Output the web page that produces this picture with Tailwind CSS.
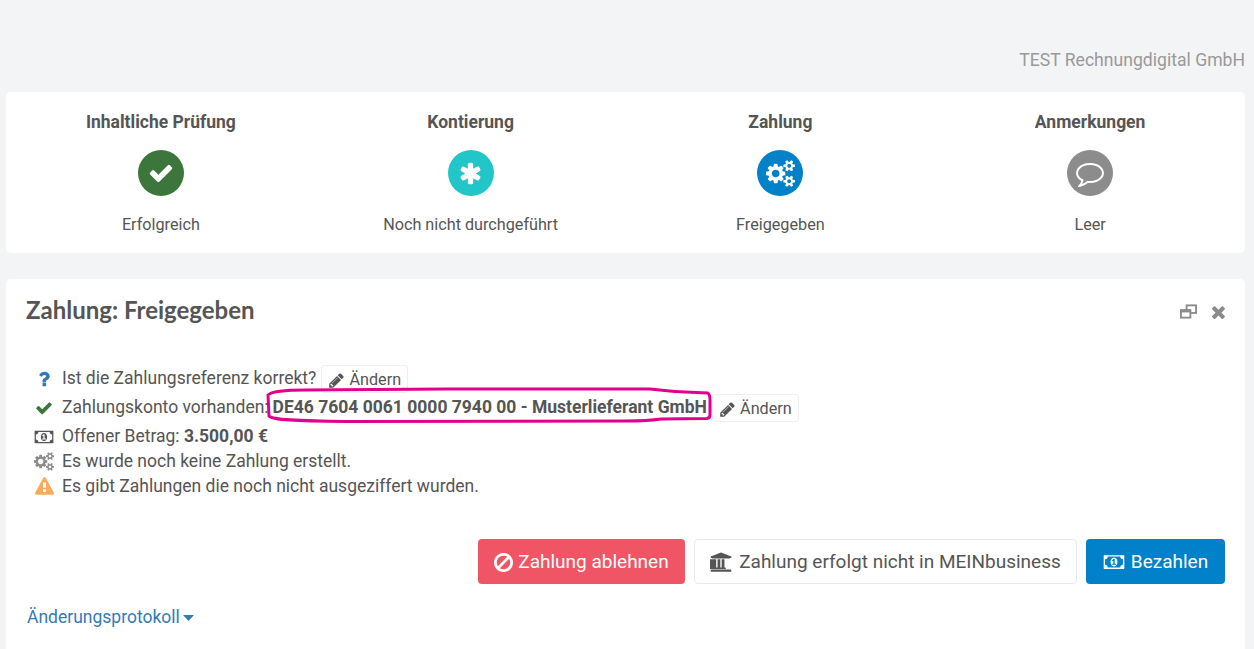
<!DOCTYPE html>
<html lang="de">
<head>
<meta charset="utf-8">
<title>Zahlung</title>
<script src="https://cdn.jsdelivr.net/npm/@tailwindcss/browser@4"></script>
</head>
<body class="bg-[#f3f4f6] font-['Roboto',sans-serif] text-[16.2px] text-[#555555] h-[649px] overflow-hidden">
<div class="h-[92px] flex items-start justify-end pt-[50px] pr-[9px] text-[17.6px] leading-[21px] text-[#999999]">TEST Rechnungdigital GmbH</div>

<section class="mx-[6px] w-[1239px] h-[161px] bg-white rounded-[5px] grid grid-cols-4 text-center">
  <div class="flex flex-col items-center pt-[18px]">
    <h3 class="font-bold text-[17.5px] leading-[24px] text-[#555555]">Inhaltliche Prüfung</h3>
    <div class="mt-[16px] w-[46px] h-[46px] rounded-full bg-[#3d763d] flex items-center justify-center">
      <svg class="w-[26px] h-[26px] fill-white" viewBox="0 0 1792 1792"><path d="M1671 566q0-40-28-68l-136-136q-28-28-68-28t-68 28l-656 657-294-295q-28-28-68-28t-68 28l-136 136q-28 28-28 68t28 68l362 362 136 136q28 28 68 28t68-28l136-136 724-724q28-28 28-68z"/></svg>
    </div>
    <p class="mt-[17px] leading-[24px]">Erfolgreich</p>
  </div>
  <div class="flex flex-col items-center pt-[18px]">
    <h3 class="font-bold text-[17.5px] leading-[24px] text-[#555555]">Kontierung</h3>
    <div class="mt-[16px] w-[46px] h-[46px] rounded-full bg-[#23c6c8] flex items-center justify-center">
      <svg class="w-[25px] h-[25px] fill-white" viewBox="0 0 1792 1792"><path d="M1546 1050q46 26 59.500 77.500t-12.500 97.500l-64 110q-26 46-77.500 59.500t-97.500-12.500l-266-153v307q0 52-38 90t-90 38h-128q-52 0-90-38t-38-90v-307l-266 153q-46 26-97.500 12.500t-77.500-59.500l-64-110q-26-46-12.500-97.500t59.500-77.500l266-154-266-154q-46-26-59.500-77.500t12.500-97.500l64-110q26-46 77.500-59.500t97.500 12.500l266 153v-307q0-52 38-90t90-38h128q52 0 90 38t38 90v307l266-153q46-26 97.500-12.500t77.500 59.500l64 110q26 46 12.500 97.500t-59.500 77.500l-266 154z"/></svg>
    </div>
    <p class="mt-[17px] leading-[24px]">Noch nicht durchgeführt</p>
  </div>
  <div class="flex flex-col items-center pt-[18px]">
    <h3 class="font-bold text-[17.5px] leading-[24px] text-[#555555]">Zahlung</h3>
    <div class="mt-[16px] w-[46px] h-[46px] rounded-full bg-[#0081c9] flex items-center justify-center">
      <svg class="w-[29px] h-[27px] fill-white" viewBox="0 0 1920 1792"><path d="M896 896q0-106-75-181t-181-75-181 75-75 181 75 181 181 75 181-75 75-181zm768 512q0-52-38-90t-90-38-90 38-38 90q0 53 37.500 90.500t90.500 37.500 90.500-37.500 37.500-90.500zm0-1024q0-52-38-90t-90-38-90 38-38 90q0 53 37.500 90.500t90.500 37.500 90.500-37.500 37.500-90.500zm-384 421v185q0 10-7 19.500t-16 10.500l-155 24q-11 35-32 76 34 48 90 115 7 11 7 20 0 12-7 19-23 30-82.500 89.500t-78.500 59.500q-11 0-21-7l-115-90q-37 19-77 31-11 108-23 155-7 24-30 24h-186q-11 0-20-7.500t-10-17.500l-23-153q-34-10-75-31l-118 89q-7 7-20 7-11 0-21-8-144-133-144-160 0-9 7-19 10-14 41-53t47-61q-23-44-35-82l-152-24q-10-1-17-9.500t-7-19.500v-185q0-10 7-19.500t16-10.500l155-24q11-35 32-76-34-48-90-115-7-11-7-20 0-12 7-20 22-30 82-89t79-59q11 0 21 7l115 90q34-18 77-32 11-108 23-154 7-24 30-24h186q11 0 20 7.500t10 17.500l23 153q34 10 75 31l118-89q8-7 20-7 11 0 21 8 144 133 144 160 0 8-7 19-12 16-42 54t-45 60q23 48 34 82l152 23q10 2 17 10.500t7 19.500zm640 533v140q0 16-149 31-12 27-30 52 51 113 51 138 0 4-4 7-122 71-124 71-8 0-46-47t-52-68q-20 2-30 2t-30-2q-14 21-52 68t-46 47q-2 0-124-71-4-3-4-7 0-25 51-138-18-25-30-52-149-15-149-31v-140q0-16 149-31 13-29 30-52-51-113-51-138 0-4 4-7 4-2 35-20t59-34 30-16q8 0 46 46.500t52 67.500q20-2 30-2t30 2q51-71 92-112l6-2q4 0 124 70 4 3 4 7 0 25-51 138 17 23 30 52 149 15 149 31zm0-1024v140q0 16-149 31-12 27-30 52 51 113 51 138 0 4-4 7-122 71-124 71-8 0-46-47t-52-68q-20 2-30 2t-30-2q-14 21-52 68t-46 47q-2 0-124-71-4-3-4-7 0-25 51-138-18-25-30-52-149-15-149-31v-140q0-16 149-31 13-29 30-52-51-113-51-138 0-4 4-7 4-2 35-20t59-34 30-16q8 0 46 46.500t52 67.500q20-2 30-2t30 2q51-71 92-112l6-2q4 0 124 70 4 3 4 7 0 25-51 138 17 23 30 52 149 15 149 31z"/></svg>
    </div>
    <p class="mt-[17px] leading-[24px]">Freigegeben</p>
  </div>
  <div class="flex flex-col items-center pt-[18px]">
    <h3 class="font-bold text-[17.5px] leading-[24px] text-[#555555]">Anmerkungen</h3>
    <div class="mt-[16px] w-[46px] h-[46px] rounded-full bg-[#8c8c8c] flex items-center justify-center">
      <svg class="w-[28px] h-[28px] fill-white" viewBox="0 0 1792 1792"><path d="M896 384q-204 0-381.500 69.500t-282 187.500-104.500 255q0 112 71.500 213.500t201.500 175.500l87 50-27 96q-24 91-70 172 152-63 275-171l43-38 57 6q69 8 130 8 204 0 381.500-69.500t282-187.500 104.500-255-104.500-255-282-187.500-381.500-69.500zm896 512q0 174-120 321.500t-326 233-450 85.500q-70 0-145-8-198 175-460 242-49 14-114 22h-5q-15 0-27-10.500t-16-27.500v-1q-3-4-.5-12t2-10 4.500-9.500l6-9 7-8.500 8-9q7-8 31-34.500t34.500-38 31-39.500 32.500-51 27-59 26-76q-157-89-247.500-220t-90.500-281q0-174 120-321.500t326-233 450-85.500 450 85.500 326 233 120 321.500z"/></svg>
    </div>
    <p class="mt-[17px] leading-[24px]">Leer</p>
  </div>
</section>

<section class="relative mx-[6px] mt-[26px] w-[1239px] h-[390px] bg-white rounded-[5px] px-[20px]">
  <div class="flex items-center justify-between pt-[16px] h-[46px]">
    <h2 class="font-['Lato',sans-serif] font-bold text-[24px] leading-[28px] text-[#555555]">Zahlung: Freigegeben</h2>
    <div class="flex items-center gap-[15px] mt-[3px] text-[#8c8c8c]">
      <svg class="w-[17px] h-[15px]" viewBox="0 0 18 15" fill="none" stroke="#8c8c8c" stroke-width="2"><rect x="7" y="1" width="10" height="8"/><rect x="1" y="6" width="10" height="8" fill="#fff"/><path d="M1 7h10" stroke-width="3"/></svg>
      <svg class="w-[13px] h-[14px] fill-[#8c8c8c]" viewBox="300 250 1200 1300"><path d="M1490 1322q0 40-28 68l-136 136q-28 28-68 28t-68-28l-294-294-294 294q-28 28-68 28t-68-28l-136-136q-28-28-28-68t28-68l294-294-294-294q-28-28-28-68t28-68l136-136q28-28 68-28t68 28l294 294 294-294q28-28 68-28t68 28l136 136q28 28 28 68t-28 68l-294 294 294 294q28 28 28 68z"/></svg>
    </div>
  </div>

  <div class="mt-[39px] text-[17.5px]">
    <div class="flex items-center h-[29px]">
      <span class="w-[36px] flex justify-center"><svg class="w-[16px] h-[16px] fill-[#337ab7]" viewBox="300 200 1200 1400"><path d="M1088 1256v240q0 16-12 28t-28 12h-240q-16 0-28-12t-12-28v-240q0-16 12-28t28-12h240q16 0 28 12t12 28zm316-600q0 54-15.500 101t-35 76.500-55 59.500-57.500 43.500-61 35.500q-41 23-68.500 65t-27.500 67q0 17-12 32.500t-28 15.500h-240q-15 0-25.500-18.500t-10.500-37.500v-45q0-83 65-156.500t143-108.500q59-27 84-56t25-76q0-42-46.500-74t-107.500-32q-65 0-108 29-35 25-107 115-13 16-31 16-12 0-25-8l-164-125q-13-10-15.500-25t5.500-28q160-266 464-266 80 0 161 31t146 83 106 127.500 41 158.500z"/></svg></span>
      <span>Ist die Zahlungsreferenz korrekt?</span>
      <button class="ml-[5px] h-[28px] w-[87px] border border-[#eeeeee] rounded-[3px] flex items-center justify-center gap-[4px] text-[16.2px] pt-[4px]">
        <svg class="w-[17px] h-[17px] fill-[#555555]" viewBox="0 0 1792 1792"><path d="M491 1536l91-91-235-235-91 91v107h128v128h107zm523-928q0-22-22-22-10 0-17 7l-542 542q-7 7-7 17 0 22 22 22 10 0 17-7l542-542q7-7 7-17zm-54-192l416 416-832 832h-416v-416zm683 96q0 53-37 90l-166 166-416-416 166-165q36-38 90-38 53 0 91 38l235 234q37 39 37 91z"/></svg>Ändern</button>
    </div>
    <div class="flex items-center h-[29px]">
      <span class="w-[36px] flex justify-center"><svg class="w-[18px] h-[18px] fill-[#3d763d]" viewBox="0 0 1792 1792"><path d="M1671 566q0-40-28-68l-136-136q-28-28-68-28t-68 28l-656 657-294-295q-28-28-68-28t-68 28l-136 136q-28 28-28 68t28 68l362 362 136 136q28 28 68 28t68-28l136-136 724-724q28-28 28-68z"/></svg></span>
      <span>Zahlungskonto vorhanden:</span>
      <strong class="ml-[4px] font-bold">DE46 7604 0061 0000 7940 00 - Musterlieferant GmbH</strong>
      <button class="ml-[5px] h-[28px] w-[87px] border border-[#eeeeee] rounded-[3px] flex items-center justify-center gap-[4px] text-[16.2px] pt-[4px]">
        <svg class="w-[17px] h-[17px] fill-[#555555]" viewBox="0 0 1792 1792"><path d="M491 1536l91-91-235-235-91 91v107h128v128h107zm523-928q0-22-22-22-10 0-17 7l-542 542q-7 7-7 17 0 22 22 22 10 0 17-7l542-542q7-7 7-17zm-54-192l416 416-832 832h-416v-416zm683 96q0 53-37 90l-166 166-416-416 166-165q36-38 90-38 53 0 91 38l235 234q37 39 37 91z"/></svg>Ändern</button>
    </div>
    <div class="flex items-center h-[25px] mt-[2px]">
      <span class="w-[36px] flex justify-center"><svg class="w-[20px] h-[18px] fill-[#555555]" viewBox="0 0 2048 1792"><path d="M832 1152h384v-96h-128v-448h-114l-148 137 77 80q42-37 55-57h2v288h-128v96zm512-256q0 70-21 142t-59.500 134-101 101-138.500 39-138.500-39-101-101-59.500-134-21-142 21-142 59.500-134 101-101 138.500-39 138.500 39 101 101 59.500 134 21 142zm512 256v-512q-106 0-181-75t-75-181h-1152q0 106-75 181t-181 75v512q106 0 181 75t75 181h1152q0-106 75-181t181-75zm128-832v1152q0 26-19 45t-45 19h-1792q-26 0-45-19t-19-45v-1152q0-26 19-45t45-19h1792q26 0 45 19t19 45z"/></svg></span>
      <span>Offener Betrag:&nbsp;<strong class="font-bold">3.500,00 €</strong></span>
    </div>
    <div class="flex items-center h-[25px]">
      <span class="w-[36px] flex justify-center"><svg class="w-[20px] h-[19px] fill-[#8c8c8c]" viewBox="0 0 1920 1792"><path d="M896 896q0-106-75-181t-181-75-181 75-75 181 75 181 181 75 181-75 75-181zm768 512q0-52-38-90t-90-38-90 38-38 90q0 53 37.500 90.500t90.500 37.500 90.500-37.500 37.500-90.500zm0-1024q0-52-38-90t-90-38-90 38-38 90q0 53 37.500 90.500t90.500 37.500 90.500-37.500 37.500-90.500zm-384 421v185q0 10-7 19.500t-16 10.500l-155 24q-11 35-32 76 34 48 90 115 7 11 7 20 0 12-7 19-23 30-82.500 89.500t-78.500 59.500q-11 0-21-7l-115-90q-37 19-77 31-11 108-23 155-7 24-30 24h-186q-11 0-20-7.500t-10-17.500l-23-153q-34-10-75-31l-118 89q-7 7-20 7-11 0-21-8-144-133-144-160 0-9 7-19 10-14 41-53t47-61q-23-44-35-82l-152-24q-10-1-17-9.500t-7-19.500v-185q0-10 7-19.500t16-10.500l155-24q11-35 32-76-34-48-90-115-7-11-7-20 0-12 7-20 22-30 82-89t79-59q11 0 21 7l115 90q34-18 77-32 11-108 23-154 7-24 30-24h186q11 0 20 7.500t10 17.500l23 153q34 10 75 31l118-89q8-7 20-7 11 0 21 8 144 133 144 160 0 8-7 19-12 16-42 54t-45 60q23 48 34 82l152 23q10 2 17 10.500t7 19.500zm640 533v140q0 16-149 31-12 27-30 52 51 113 51 138 0 4-4 7-122 71-124 71-8 0-46-47t-52-68q-20 2-30 2t-30-2q-14 21-52 68t-46 47q-2 0-124-71-4-3-4-7 0-25 51-138-18-25-30-52-149-15-149-31v-140q0-16 149-31 13-29 30-52-51-113-51-138 0-4 4-7 4-2 35-20t59-34 30-16q8 0 46 46.500t52 67.500q20-2 30-2t30 2q51-71 92-112l6-2q4 0 124 70 4 3 4 7 0 25-51 138 17 23 30 52 149 15 149 31zm0-1024v140q0 16-149 31-12 27-30 52 51 113 51 138 0 4-4 7-122 71-124 71-8 0-46-47t-52-68q-20 2-30 2t-30-2q-14 21-52 68t-46 47q-2 0-124-71-4-3-4-7 0-25 51-138-18-25-30-52-149-15-149-31v-140q0-16 149-31 13-29 30-52-51-113-51-138 0-4 4-7 4-2 35-20t59-34 30-16q8 0 46 46.500t52 67.500q20-2 30-2t30 2q51-71 92-112l6-2q4 0 124 70 4 3 4 7 0 25-51 138 17 23 30 52 149 15 149 31z"/></svg></span>
      <span>Es wurde noch keine Zahlung erstellt.</span>
    </div>
    <div class="flex items-center h-[25px]">
      <span class="w-[36px] flex justify-center"><svg class="w-[19px] h-[19px] fill-[#f8ac59]" viewBox="0 0 1792 1792"><path d="M1024 1375v-190q0-14-9.500-23.500t-22.500-9.500h-192q-13 0-22.500 9.500t-9.500 23.500v190q0 14 9.500 23.500t22.500 9.500h192q13 0 22.500-9.500t9.500-23.500zm-2-374l18-459q0-12-10-19-13-11-24-11h-220q-11 0-24 11-10 7-10 21l17 457q0 10 10 16.500t24 6.500h185q14 0 23.500-6.500t10.500-16.500zm-14-934l768 1408q35 63-2 126-17 29-46.500 46t-63.500 17h-1536q-34 0-63.500-17t-46.500-46q-37-63-2-126l768-1408q17-31 47-49t65-18 65 18 47 49z"/></svg></span>
      <span>Es gibt Zahlungen die noch nicht ausgeziffert wurden.</span>
    </div>
  </div>

  <div class="mt-[40px] flex justify-end gap-[9px] text-[19px]">
    <button class="h-[45px] w-[207px] rounded-[4px] bg-[#ef5565] text-white flex items-center justify-center gap-[5px] pt-[1px]">
      <svg class="w-[19px] h-[19px] fill-white" viewBox="128 128 1536 1536"><path d="M1440 893q0-161-87-295l-754 753q137 89 297 89 111 0 211.500-43.500t173.500-116.500 116-174.500 43-212.500zm-999 299l755-754q-135-91-300-91-148 0-273 73t-198 199-73 274q0 162 89 299zm1223-299q0 157-61 300t-163.500 246-245 164-298.500 61-298.500-61-245-164-163.500-246-61-300 61-299.500 163.500-245.500 245-164 298.500-61 298.500 61 245 164 163.500 245.500 61 299.500z"/></svg>Zahlung ablehnen</button>
    <button class="h-[45px] w-[383px] rounded-[4px] border border-[#e7eaec] bg-white flex items-center justify-center gap-[7px] text-[#555555] pt-[1px]">
      <svg class="w-[22px] h-[20px] fill-[#555555]" viewBox="0 0 2048 1792"><path d="M960 0l960 384v128h-128q0 26-20.500 45t-48.500 19h-1526q-28 0-48.500-19t-20.500-45h-128v-128zm-704 640h256v768h128v-768h256v768h128v-768h256v768h59q28 0 48.500 19t20.500 45v64h-1664v-64q0-26 20.500-45t48.500-19h59v-768zm1595 960q28 0 48.500 19t20.500 45v128h-1920v-128q0-26 20.500-45t48.500-19h1782z" transform="translate(64 0)"/></svg>Zahlung erfolgt nicht in MEINbusiness</button>
    <button class="h-[45px] w-[139px] rounded-[4px] bg-[#0081c9] text-white flex items-center justify-center gap-[6px] pt-[1px]">
      <svg class="w-[22px] h-[20px] fill-white" viewBox="0 0 2048 1792"><path d="M832 1152h384v-96h-128v-448h-114l-148 137 77 80q42-37 55-57h2v288h-128v96zm512-256q0 70-21 142t-59.500 134-101 101-138.500 39-138.500-39-101-101-59.500-134-21-142 21-142 59.500-134 101-101 138.500-39 138.500 39 101 101 59.500 134 21 142zm512 256v-512q-106 0-181-75t-75-181h-1152q0 106-75 181t-181 75v512q106 0 181 75t75 181h1152q0-106 75-181t181-75zm128-832v1152q0 26-19 45t-45 19h-1792q-26 0-45-19t-19-45v-1152q0-26 19-45t45-19h1792q26 0 45 19t19 45z"/></svg>Bezahlen</button>
  </div>

  <a class="mt-[21px] flex items-center gap-[3px] text-[#337ab7] text-[17.5px] leading-[24px] pl-[1px]">Änderungsprotokoll<svg class="w-[11px] h-[6px] fill-[#337ab7] mt-[1px]" viewBox="0 0 11 6"><path d="M0 0h11L5.500 6z"/></svg></a>

  <svg class="absolute left-[260px] top-[108px] w-[446px] h-[36px] pointer-events-none" viewBox="0 0 446 36" fill="none" stroke="#e0008c" stroke-width="3" stroke-linejoin="round"><path d="M2 8 C6 4 25 3 40 3 L180 2 L384 2 C392 3 410 5 430 5.500 L442 6 Q444 8 444 12 L444 28 Q444 31 441 31.500 L395 32 C385 33.500 380 34 360 34 L80 34.500 C30 34 6 33 3 29 Z"/></svg>
</section>
</body>
</html>
